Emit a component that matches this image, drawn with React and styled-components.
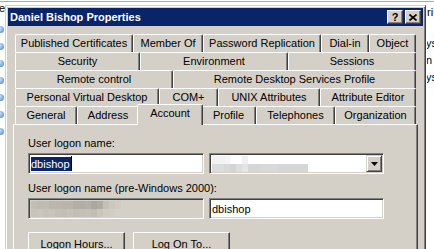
import styled, { createGlobalStyle, css } from "styled-components";

const GlobalStyle = createGlobalStyle`
  html, body {
    margin: 0;
    padding: 0;
    background: #fff;
  }
  body {
    font-family: "Liberation Sans", Arial, sans-serif;
    font-size: 11px;
    color: #000;
  }
`;

const Desktop = styled.div`
  position: relative;
  width: 434px;
  height: 249px;
  overflow: hidden;
  background: #fff;
`;

// list view that sits behind the dialog
const Backdrop = styled.div`
  display: flex;
  justify-content: space-between;
  height: 100%;
  border-top: 1px solid #fff;
  box-shadow: inset 0 2px 0 -1px #a8a8a8;
`;

const SideList = styled.div`
  width: ${(p) => p.$w}px;
  overflow: hidden;
  display: flex;
  flex-direction: column;
`;

const ListHeader = styled.div`
  height: ${(p) => p.$h}px;
  line-height: ${(p) => p.$h}px;
  white-space: nowrap;
  margin-left: ${(p) => p.$shift || 0}px;
`;

const TreeItems = styled.div`
  margin-top: 5px;
  width: 5px;
  border-right: 1px dotted #404040;
`;

const TreeItem = styled.div`
  height: 17px;
  display: flex;
  align-items: center;
`;

const Node = styled.span`
  width: 7px;
  height: 7px;
  margin-left: -3px;
  border-radius: 50%;
  background: radial-gradient(circle at 35% 35%, #d8e8fb, #6a9be0 70%, #4a78c0);
`;

const RowText = styled.div`
  height: 17px;
  line-height: 17px;
  white-space: nowrap;
  margin-left: -1px;
`;

// the properties window
const Window = styled.div`
  position: absolute;
  left: 5px;
  top: 5px;
  width: 421px;
  height: 262px;
  box-sizing: border-box;
  background: #d4d0c8;
  border: 1px solid;
  border-color: #d4d0c8 #404040 #404040 #d4d0c8;
  box-shadow: inset 1px 1px #fff, inset -1px -1px #808080;
  padding: 2px;
  display: flex;
  flex-direction: column;
`;

const TitleBar = styled.div`
  height: 18px;
  background: #0a246a;
  color: #fff;
  font-weight: bold;
  font-size: 11px;
  display: flex;
  align-items: center;
  justify-content: space-between;
  padding: 0 2px 0 2px;
`;

const TitleButtons = styled.div`
  display: flex;
  gap: 2px;
`;

const raised = css`
  background: #d4d0c8;
  box-sizing: border-box;
  border: 1px solid;
  border-color: #fff #404040 #404040 #fff;
  box-shadow: inset -1px -1px #808080;
`;

const CaptionButton = styled.div`
  ${raised}
  width: 16px;
  height: 14px;
  display: flex;
  align-items: center;
  justify-content: center;
  color: #000;
  font-weight: bold;
  font-size: 11px;
  line-height: 12px;
`;

const Body = styled.div`
  flex: 1;
  display: flex;
  flex-direction: column;
  padding: 8px 5px 0;
`;

const TabStrip = styled.div`
  display: flex;
  flex-direction: column;
  margin: 0 2px;
`;

const TabRow = styled.div`
  display: flex;
  height: 18px;
  align-items: flex-start;
`;

const Tab = styled.div`
  box-sizing: border-box;
  flex: none;
  width: ${(p) => p.$w}px;
  height: 18px;
  background: #d4d0c8;
  border-top: 1px solid #fff;
  border-left: 1px solid #fff;
  border-right: 1px solid #404040;
  box-shadow: inset -1px 0 #808080;
  border-radius: 2px 2px 0 0;
  text-align: center;
  line-height: 17px;
  white-space: nowrap;
  overflow: hidden;

  ${(p) =>
    p.$active &&
    css`
      position: relative;
      z-index: 1;
      width: ${p.$w + 4}px;
      height: 21px;
      margin: -2px -2px 0;
      line-height: 16px;
    `}
`;

const Panel = styled.div`
  flex: 1;
  background: #d4d0c8;
  border-top: 1px solid #fff;
  border-left: 1px solid #fff;
  border-right: 1px solid #404040;
  box-shadow: inset -1px 0 #808080;
  padding: 12px 0 0 14px;
`;

const Label = styled.div`
  height: 13px;
  line-height: 13px;
  margin-top: ${(p) => p.$gap || 0}px;
  white-space: nowrap;
`;

const FieldRow = styled.div`
  display: flex;
  gap: 5px;
  margin-top: 3px;
`;

const sunken = css`
  box-sizing: border-box;
  height: 21px;
  border: 1px solid;
  border-color: #808080 #fff #fff #808080;
  box-shadow: inset 1px 1px #404040, inset -1px -1px #d4d0c8;
`;

const TextBox = styled.div`
  ${sunken}
  width: ${(p) => p.$w}px;
  background: ${(p) => (p.$disabled ? "#d4d0c8" : "#fff")};
  padding: 1px 1px 1px 2px;
  display: flex;
  align-items: center;
  white-space: nowrap;
`;

const Selected = styled.span`
  background: #0a246a;
  color: #fff;
  line-height: 14px;
  padding-right: 1px;
`;

const Caret = styled.span`
  width: 1px;
  height: 15px;
  background: #000;
`;

const Combo = styled.div`
  ${sunken}
  width: 175px;
  background: #fff;
  padding: 1px;
  display: flex;
  align-items: stretch;
`;

const ComboValue = styled.div`
  flex: 1;
  display: flex;
  align-items: center;
  padding-left: 1px;
`;

const DropButton = styled.div`
  ${raised}
  border-color: #d4d0c8 #404040 #404040 #d4d0c8;
  box-shadow: inset 1px 1px #fff, inset -1px -1px #808080;
  width: 16px;
  display: flex;
  align-items: center;
  justify-content: center;
`;

// pixelated (censored) text
const Blur = styled.div`
  display: grid;
  grid-template-columns: repeat(${(p) => p.$cols}, ${(p) => p.$cell}px);
  grid-auto-rows: 8px;
`;

const Pixel = styled.span`
  background: ${(p) => p.$c};
`;

const ButtonRow = styled.div`
  display: flex;
  gap: 8px;
  margin-top: 13px;
`;

const PushButton = styled.div`
  ${raised}
  width: 97px;
  height: 23px;
  display: flex;
  align-items: center;
  justify-content: center;
  white-space: nowrap;
`;

const tabRows = [
  [
    ["Published Certificates", 118],
    ["Member Of", 70],
    ["Password Replication", 118],
    ["Dial-in", 48],
    ["Object", 47],
  ],
  [
    ["Security", 125],
    ["Environment", 148],
    ["Sessions", 128],
  ],
  [
    ["Remote control", 158],
    ["Remote Desktop Services Profile", 243],
  ],
  [
    ["Personal Virtual Desktop", 144],
    ["COM+", 59],
    ["UNIX Attributes", 102],
    ["Attribute Editor", 96],
  ],
  [
    ["General", 62],
    ["Address", 62],
    ["Account", 62],
    ["Profile", 55],
    ["Telephones", 79],
    ["Organization", 81],
  ],
];

const comboPixels = [
  "#f2f2f2", "#f2f2f2", "#f4f4f4", "#fff", "#fff", "#f0f0f0", "#fff", "#fff", "#fff", "#fff", "#fff", "#fff", "#fff", "#fff", "#fff", "#fff",
  "#dcdcdc", "#dcdcdc", "#d8d8d8", "#d4d4d4", "#dedede", "#e4e4e4", "#d6d6d6", "#d6d6d6", "#d8d8d8", "#d8d8d8", "#d8d8d8", "#d6d6d6", "#d6d6d6", "#d6d6d6", "#d6d6d6", "#d6d6d6",
];

const disabledPixels = [
  "#c2beb6", "#bfbbb3", "#c0bcb4", "#bbb7af", "#bab6ae", "#b8b4ac", "#b9b5ad", "#b3afa7", "#b1ada5", "#b4b0a8", "#aaa6a0", "#b0aca4", "#c4c0b8", "#ccc8c0", "#d0ccc4", "#d4d0c8",
  "#c8c4bc", "#cac6be", "#c6c2ba", "#c8c4bc", "#c4c0b8", "#c2beb6", "#c6c2ba", "#c2beb6", "#c4c0b8", "#c6c2ba", "#c2beb6", "#cac6be", "#d0ccc4", "#d2cec6", "#d4d0c8", "#d4d0c8",
];

function Pixelated({ colors, cell }) {
  return (
    <Blur $cols={colors.length / 2} $cell={cell}>
      {colors.map((c, i) => (
        <Pixel key={i} $c={c} />
      ))}
    </Blur>
  );
}

function CloseGlyph() {
  return (
    <svg width="8" height="7" viewBox="0 0 8 7">
      <path d="M0.5 0.5L7.5 6.5M7.5 0.5L0.5 6.5" stroke="#000" strokeWidth="1.6" />
    </svg>
  );
}

function DownArrow() {
  return (
    <svg width="7" height="4" viewBox="0 0 7 4">
      <polygon points="0,0 7,0 3.5,4" fill="#000" />
    </svg>
  );
}

export default function App() {
  return (
    <>
      <GlobalStyle />
      <Desktop>
        <Backdrop>
          <SideList $w={5}>
            <ListHeader $h={15} $shift={-1}>e</ListHeader>
            <TreeItems>
              {[0, 1, 2, 3, 4, 5, 6].map((i) => (
                <TreeItem key={i}>
                  <Node />
                </TreeItem>
              ))}
            </TreeItems>
          </SideList>
          <SideList $w={7}>
            <ListHeader $h={22}>ri</ListHeader>
            <div style={{ height: 12 }} />
            <RowText>ys</RowText>
            <RowText>n</RowText>
            <RowText>ys</RowText>
          </SideList>
        </Backdrop>

        <Window>
          <TitleBar>
            <span>Daniel Bishop Properties</span>
            <TitleButtons>
              <CaptionButton>?</CaptionButton>
              <CaptionButton>
                <CloseGlyph />
              </CaptionButton>
            </TitleButtons>
          </TitleBar>

          <Body>
            <TabStrip>
              {tabRows.map((row, r) => (
                <TabRow key={r}>
                  {row.map(([name, w]) => (
                    <Tab key={name} $w={w} $active={name === "Account"}>
                      {name}
                    </Tab>
                  ))}
                </TabRow>
              ))}
            </TabStrip>

            <Panel>
              <Label>User logon name:</Label>
              <FieldRow>
                <TextBox $w={176}>
                  <Selected>dbishop</Selected>
                  <Caret />
                </TextBox>
                <Combo>
                  <ComboValue>
                    <Pixelated colors={comboPixels} cell={6} />
                  </ComboValue>
                  <DropButton>
                    <DownArrow />
                  </DropButton>
                </Combo>
              </FieldRow>

              <Label $gap={8}>User logon name (pre-Windows 2000):</Label>
              <FieldRow>
                <TextBox $w={176} $disabled>
                  <Pixelated colors={disabledPixels} cell={6} />
                </TextBox>
                <TextBox $w={175}>dbishop</TextBox>
              </FieldRow>

              <ButtonRow>
                <PushButton>Logon Hours...</PushButton>
                <PushButton>Log On To...</PushButton>
              </ButtonRow>
            </Panel>
          </Body>
        </Window>
      </Desktop>
    </>
  );
}
